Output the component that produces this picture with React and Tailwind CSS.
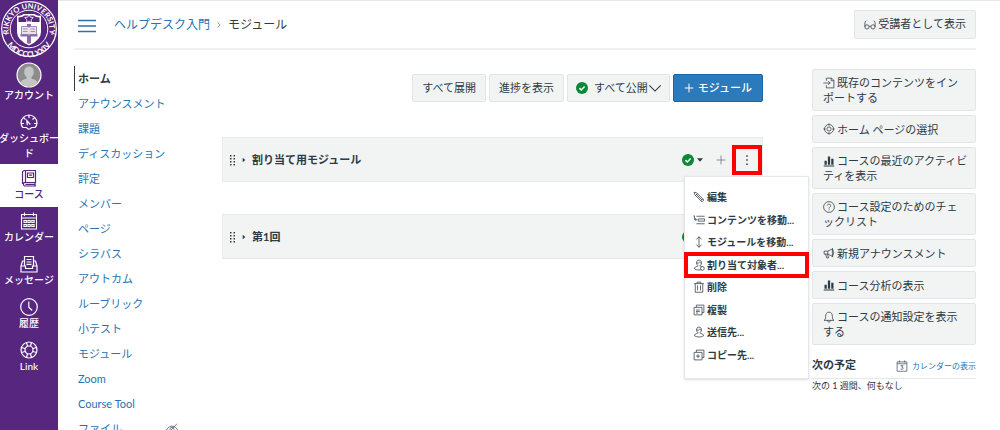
import {
  IoChevronForward,
  IoCaretForwardSharp,
  IoCaretDownSharp,
} from "react-icons/io5";

const Icon = ({ className = "size-3", box = 16, width = 1, children }) => (
  <svg
    viewBox={`0 0 ${box} ${box}`}
    className={`inline-block shrink-0 ${className}`}
    fill="none"
    stroke="currentColor"
    strokeWidth={width}
    aria-hidden="true"
  >
    {children}
  </svg>
);

const Logo = () => (
  <svg viewBox="0 0 58 58" className="block w-full text-white" role="img" aria-label="Rikkyo University">
    <defs>
      <path id="ringTop" d="M9.5 35.5A20.5 20.5 0 1 1 48.5 35.5" />
      <path id="ringBottom" d="M3.4 31.5A25.600 25.600 0 0 0 54.6 31.5" />
    </defs>
    <circle cx="29" cy="29" r="27.300" fill="none" stroke="currentColor" strokeWidth="1.2" />
    <circle cx="29" cy="29" r="18.800" fill="none" stroke="currentColor" strokeWidth="1" />
    <text fill="currentColor" fontSize="7.500" fontWeight="700" textAnchor="middle">
      <textPath href="#ringTop" startOffset="50%">RIKKYO UNIVERSITY</textPath>
    </text>
    <text fill="currentColor" fontSize="8" fontWeight="700" textAnchor="middle">
      <textPath href="#ringBottom" startOffset="50%">MDCCCLXXIV</textPath>
    </text>
    <circle cx="6" cy="34" r="0.8" fill="currentColor" />
    <circle cx="52" cy="34" r="0.8" fill="currentColor" />
    <path d="M17 15.5q4 1 6.500-1.500h11q2.500 2.500 6.500 1.500V32q0 8-12 13.500Q17 40 17 32z" fill="#fff" />
    <path d="M18.500 17.500q4 0 6-2h9q2 2 6 2V22h-21z" fill="#57267f" />
    <path d="m29 14.500 1.300 2.700 3 .4-2.200 2 .6 3-2.700-1.500-2.700 1.500.6-3-2.200-2 3-.4z" fill="#57267f" stroke="#fff" strokeWidth=".8" />
    <path d="M27 24h4v19l-2 1-2-1z" fill="#8d6aa8" />
    <path d="M20.500 34h17v2.500h-17z" fill="#8d6aa8" />
    <path d="M21.500 26.500h6.500l1 .7 1-.7h6.500v8H30l-1 .7-1-.7h-6.500z" fill="#e9e1ee" stroke="#8d6aa8" strokeWidth=".8" />
    <path d="M23 29h4.500M23 31.500h4.500M30.500 29H35M30.500 31.500H35" stroke="#8d6aa8" strokeWidth=".7" />
  </svg>
);

const globalNav = [
  {
    label: "アカウント",
    item: "pt-1 pb-[5px]",
    icon: (
      <Icon className="size-[26px]" box={26}>
        <circle cx="13" cy="13" r="12" fill="#8c8c8c" strokeWidth="1.2" />
        <path d="M13 4.500c-3.300 0-4.800 2.300-4.800 5.200 0 2.300.8 4.200 2.300 5.200v1.800c-2.700.8-5.300 1.500-6 3.300A11.300 11.300 0 0 0 13 24.300a11.300 11.300 0 0 0 8.500-4.300c-.7-1.800-3.300-2.500-6-3.300v-1.800c1.500-1 2.300-2.900 2.300-5.200 0-2.900-1.500-5.200-4.800-5.200z" fill="#c4c4c4" stroke="none" />
      </Icon>
    ),
  },
  {
    label: "ダッシュボー\nド",
    item: "pt-[5px] pb-[3px]",
    icon: (
      <Icon className="size-[18px]" box={18} width={1.2}>
        <path d="M3 14.500h3.500a2.800 2.800 0 0 0 5 0H15c1.500-1.500 2-3 2-4.500a8 8 0 0 0-16 0c0 1.500.5 3 2 4.500zM9 2.500V5M3.800 4.800 5.500 6.500M14.200 4.800l-1.700 1.700M1.500 10.500H4M14 10.500h2.500M7.300 12.200 6.800 7.500l3.500 4" />
      </Icon>
    ),
  },
  {
    label: "コース",
    active: true,
    item: "py-[5px]",
    icon: (
      <Icon className="size-[18px]" box={18} width={1.2}>
        <path d="M4.500 1.500h11v12h-11a2 2 0 0 0 0 3.500h11.500M2.500 15V3.500a2 2 0 0 1 2-2M4.500 13.500a2 2 0 0 0-2 1.500M15 13.500v3M5.500 1.500v12M7.500 4h6v4.500h-6zM9 6.200h3M5.500 15.300H15" />
      </Icon>
    ),
  },
  {
    label: "カレンダー",
    item: "py-[5px]",
    icon: (
      <Icon className="size-[18px]" box={18} width={1.1}>
        <path d="M1.500 2.500h15v14.500h-15zM1.500 6h15M4.500.5v3.500M13.500.5v3.500M4 8.500h2.300v2H4zM7.900 8.500h2.300v2H7.900zM11.800 8.500h2.300v2h-2.300zM4 12.500h2.300v2H4zM7.900 12.500h2.300v2H7.900zM11.800 12.500h2.300v2h-2.300z" />
      </Icon>
    ),
  },
  {
    label: "メッセージ",
    item: "py-[5px]",
    icon: (
      <Icon className="size-[18px]" box={18} width={1.2}>
        <path d="M4.500 11V1.500h9V11M4.500 6H2.500L1 11v6h16v-6l-1.500-5h-2M1 11h4.500v2.500h7V11H17M6.500 4.500h5M6.500 7h5M6.500 9.300h5" />
      </Icon>
    ),
  },
  {
    label: "履歴",
    item: "py-[5px]",
    icon: (
      <Icon className="size-[18px]" box={18} width={1.2}>
        <circle cx="9" cy="9" r="8.300" />
        <path d="M8.800 3.500v5.700l3.400 3.300" />
      </Icon>
    ),
  },
  {
    label: "Link",
    item: "py-[5px]",
    icon: (
      <Icon className="size-[18px]" box={18} width={1.2}>
        <circle cx="9" cy="9" r="8" />
        <circle cx="9" cy="9" r="4" />
        <path d="M6.500 1.500 7.500 5M11.500 1.500l-1 3.500M6.500 16.500l1-3.500M11.500 16.500l-1-3.500M1.500 6.500 5 7.500M1.500 11.500l3.500-1M16.500 6.500 13 7.500M16.500 11.500l-3.500-1" />
      </Icon>
    ),
  },
];

const courseNav = [
  "アナウンスメント",
  "課題",
  "ディスカッション",
  "評定",
  "メンバー",
  "ページ",
  "シラバス",
  "アウトカム",
  "ルーブリック",
  "小テスト",
  "モジュール",
  "Zoom",
  "Course Tool",
];

const person = (
  <path d="M8 1.500c-2 0-3.300 1.500-3.300 3.500 0 1.600.7 3 1.800 3.600v1C3.800 10 2 11 2 13c2 2.200 10 2.200 12 0 0-2-1.800-3-4.500-3.400v-1c1.100-.6 1.800-2 1.800-3.600 0-2-1.300-3.500-3.300-3.500zM4.800 5.500q3 .5 4-1.500 1 1.500 2.500 1.500" />
);

const menuItems = [
  {
    label: "編集",
    icon: <path d="M1.500 1.500 5 2.500l9.500 9.500-2.500 2.500L2.500 5zM3.500 6 6 3.500M10.500 13 13 10.500M4.500 4.500l7.500 7.500" />,
  },
  {
    label: "コンテンツを移動...",
    icon: <path d="M.5 2.500H2V7.500h2.500M3 5.500 5 7.500 3 9.500M4.500 3h11M7 6.500h8.500v3H7zM4.500 13h11" />,
  },
  {
    label: "モジュールを移動...",
    icon: <path d="M8 1v14M4.500 4.500 8 1l3.500 3.500M4.500 11.500 8 15l3.500-3.500" />,
  },
  {
    label: "割り当て対象者...",
    marked: true,
    icon: (
      <>
        {person}
        <circle cx="12.500" cy="12.500" r="2.500" fill="#fff" />
      </>
    ),
  },
  {
    label: "削除",
    icon: <path d="M1.500 3.500h13M5.500 3.500v-2h5v2M3 3.500v11.500h10V3.500M6 6v6.500M10 6v6.500" />,
  },
  {
    label: "複製",
    icon: <path d="M4.500 4V1.500h10v10H12M1.500 4.500H12v10H1.500zM4 8h5M4 10h5M4 12h3" />,
  },
  { label: "送信先...", icon: person },
  {
    label: "コピー先...",
    icon: <path d="M4.500 4V1.500h10v10H12M1.500 4.500H12v10H1.500zM6.700 7v5M4.200 9.500h5" />,
  },
];

const chart = (
  <g fill="currentColor" stroke="none">
    <path d="M1 14h14v1.200H1zM2 7.500h3V13H2zM6.500 2h3v11h-3zM11 5h3v8h-3z" />
  </g>
);

const sideButtons = [
  {
    lines: ["既存のコンテンツをイン", "ポートする"],
    icon: <path d="M4.500 5V1.500h7l3 3v10h-10V11M11 1.500V5h3.500M.5 8h9M7 5.500 9.500 8 7 10.500" />,
  },
  {
    lines: ["ホーム ページの選択"],
    icon: (
      <>
        <circle cx="8" cy="8" r="6" />
        <circle cx="8" cy="8" r="2.800" />
        <path d="M8 .5v3M8 12.500v3M.5 8h3M12.500 8h3" />
      </>
    ),
  },
  { lines: ["コースの最近のアクティビ", "ティを表示"], icon: chart },
  {
    lines: ["コース設定のためのチェ", "ックリスト"],
    icon: (
      <>
        <circle cx="8" cy="8" r="7.200" />
        <path d="M5.700 6.300C5.700 3.500 10.300 3.500 10.300 6.300 10.300 8 8 8 8 10M8 11.200v1.300" />
      </>
    ),
  },
  {
    lines: ["新規アナウンスメント"],
    icon: <path d="M1.500 5.500h5l6-3v10l-6-3h-5zM3.500 9.500l1.500 5h2.500l-1.500-5M6.500 5.500v4M12.500 1.500q3.500 6 0 12" />,
  },
  { lines: ["コース分析の表示"], icon: chart },
  {
    lines: ["コースの通知設定を表示", "する"],
    icon: <path d="M1.500 12.500h13c-1.500-1-2-2-2-5.500 0-3-1.500-5.500-4.500-5.500S3.500 4 3.500 7c0 3.500-.5 4.500-2 5.500zM6 12.500c0 3 4 3 4 0" />,
  },
];

const Published = () => (
  <Icon className="size-3" width={2}>
    <circle cx="8" cy="8" r="8" fill="#0b8738" stroke="none" />
    <path d="m4.500 8.200 2.500 2.400L11.500 6" stroke="#fff" />
  </Icon>
);

const Kebab = () => (
  <Icon className="size-3">
    <path d="M7 1.500h2v2H7zM7 7h2v2H7zM7 12.500h2v2H7z" fill="currentColor" stroke="none" />
  </Icon>
);

const Menu = () => (
  <div
    role="menu"
    className="absolute top-[38px] -right-[47px] z-10 flex h-[203px] w-[125px] flex-col border border-gray-200 bg-white pt-[9px] pb-3 shadow-sm"
  >
    {menuItems.map((m) => (
      <button
        key={m.label}
        role="menuitem"
        className="relative flex flex-1 items-center gap-[2px] pl-2 text-[10px] leading-4 font-bold whitespace-nowrap text-[#2d3b45]"
      >
        <Icon>{m.icon}</Icon>
        {m.label}
        {m.marked && <span className="absolute -inset-x-px -inset-y-[2px] border-4 border-[#fe0000]" />}
      </button>
    ))}
  </div>
);

const Module = ({ title, open }) => (
  <section className="relative flex h-[45px] items-center border border-[#e8eaec] bg-[#f2f4f4] px-[6px]">
    <Icon className="size-3" box={12} width={0}>
      <path
        d="M1 1h1.500v1.500H1zM4.500 1H6v1.500H4.500zM1 4h1.500v1.500H1zM4.500 4H6v1.500H4.500zM1 7h1.500v1.500H1zM4.500 7H6v1.500H4.500zM1 10h1.500v1.500H1zM4.500 10H6v1.500H4.500z"
        fill="currentColor"
      />
    </Icon>
    <button className="flex items-center gap-[5px] text-[11px] leading-4 font-bold">
      <IoCaretForwardSharp size={6} />
      {title}
    </button>
    <div className="ml-auto flex items-center">
      <button className="flex items-center gap-[2px]" aria-label="公開">
        <Published />
        <IoCaretDownSharp size={8} />
      </button>
      <button className="ml-[7px] flex size-5 items-center justify-center text-gray-500" aria-label="追加">
        <Icon>
          <path d="M8 2v12M2 8h12" />
        </Icon>
      </button>
      <button
        className={`-mr-[6px] ml-px flex size-[30px] items-center justify-center border-4 ${
          open ? "border-[#fe0000] bg-[#f2f4f4]" : "border-transparent"
        }`}
        aria-label="メニュー"
      >
        <Kebab />
      </button>
    </div>
    {open && <Menu />}
  </section>
);

const grayButton = "rounded-xs border border-[#e3e6e8] bg-[#f2f4f4] text-[11px] text-[#2d3b45]";

export default function App() {
  return (
    <div className="flex h-screen overflow-hidden bg-white font-[Lato,'Noto_Sans_CJK_JP',sans-serif] text-[#2d3b45]">
      <nav className="w-[58px] shrink-0 bg-[#57267f] text-white">
        <a href="#top" className="block">
          <Logo />
        </a>
        {globalNav.map((n) => (
          <a
            key={n.label}
            href="#nav"
            className={`flex flex-col items-center text-center text-[10px] leading-[15px] font-medium whitespace-pre ${n.item} ${
              n.active ? "bg-white text-[#57267f]" : ""
            }`}
          >
            {n.icon}
            <span>{n.label}</span>
          </a>
        ))}
      </nav>

      <div className="min-w-0 flex-1 border-t border-gray-200 pr-6 pl-4">
        <header className="flex h-[49px] items-center border-b-2 border-[#eff0f1] pl-1">
          <button className="text-[#2573b5]" aria-label="ナビゲーション">
            <Icon className="size-[18px]" box={18} width={1.3}>
              <path d="M0 3.500h18M0 9h18M0 14.500h18" />
            </Icon>
          </button>
          <div className="flex items-center gap-[5px] pl-[18px] text-[12px] leading-5">
            <a href="#course" className="text-[#2573b5]">
              ヘルプデスク入門
            </a>
            <IoChevronForward size={8} className="text-gray-500" />
            <span>モジュール</span>
          </div>
          <button className={`${grayButton} ml-auto flex h-[29px] items-center gap-[2px] px-[9px]`}>
            <Icon>
              <circle cx="4" cy="10.500" r="2.800" />
              <circle cx="12" cy="10.500" r="2.800" />
              <path d="M1.200 10.500V5q0-2 2-2.500M14.800 10.500V5q0-2-2-2.500M6.800 10q1.200-1 2.400 0" />
            </Icon>
            受講者として表示
          </button>
        </header>

        <div className="flex pt-4">
          <nav className="w-[148px] shrink-0 text-[11px] leading-[25px] text-[#2573b5]">
            <a href="#home" className="block border-l border-[#2d3b45] pl-[3px] font-bold text-[#2d3b45]">
              ホーム
            </a>
            {courseNav.map((c) => (
              <a key={c} href="#course-nav" className="block pl-1">
                {c}
              </a>
            ))}
            <a href="#files" className="flex items-center justify-between pr-11 pl-1">
              ファイル
              <Icon className="size-3 text-gray-600">
                <path d="M.5 8.500q7.500-9 15 0-7.500 8-15 0zM1.500 15l13-14" />
                <circle cx="8" cy="8.500" r="2.800" />
              </Icon>
            </a>
          </nav>

          <main className="min-w-0 flex-1 pt-2">
            <div className="flex items-center justify-end gap-[3px]">
              <button className={`${grayButton} h-7 px-[9px]`}>すべて展開</button>
              <button className={`${grayButton} h-7 px-[9px]`}>進捗を表示</button>
              <button className={`${grayButton} flex h-7 items-center pr-[7px] pl-2`}>
                <Published />
                <span className="pl-[6px]">すべて公開</span>
                <Icon className="size-[14px]" width={1.3}>
                  <path d="m1.500 5 6.500 6.500L14.500 5" />
                </Icon>
              </button>
              <button className="flex h-7 items-center gap-1 rounded-xs border border-[#1d65a3] bg-[#2b7abc] px-[10px] text-[11px] font-medium text-white">
                <Icon className="size-[10px]" width={1.6}>
                  <path d="M8 1v14M1 8h14" />
                </Icon>
                モジュール
              </button>
            </div>
            <div className="flex flex-col gap-8 pt-[35px]">
              <Module title="割り当て用モジュール" open />
              <Module title="第1回" />
            </div>
          </main>

          <aside className="ml-[49px] w-[164px] shrink-0 pt-[3px]">
            <div className="flex flex-col gap-1">
              {sideButtons.map((b) => (
                <button
                  key={b.lines[0]}
                  className={`${grayButton} min-h-7 py-[5px] pl-[10px] text-left leading-[15px] whitespace-nowrap`}
                >
                  <span className="flex items-center gap-[2px]">
                    <Icon>{b.icon}</Icon>
                    {b.lines[0]}
                  </span>
                  {b.lines[1]}
                </button>
              ))}
            </div>
            <div className="mt-2 flex h-[26px] items-center border-b border-gray-200">
              <h2 className="text-[11px] font-bold">次の予定</h2>
              <a href="#calendar" className="ml-auto flex items-center gap-1 text-[8px] text-[#2573b5]">
                <Icon className="size-3 text-gray-600">
                  <path d="M1.500 2.500h13v12.500h-13zM1.500 5h13M4.500.5v3M11.500.5v3M6 7.500h3.500L7.500 9.500q2.500 0 2 2-1 1.500-3.500.5" />
                </Icon>
                カレンダーの表示
              </a>
            </div>
            <p className="text-[9px] leading-[14px]">次の 1 週間、何もなし</p>
          </aside>
        </div>
      </div>
    </div>
  );
}
